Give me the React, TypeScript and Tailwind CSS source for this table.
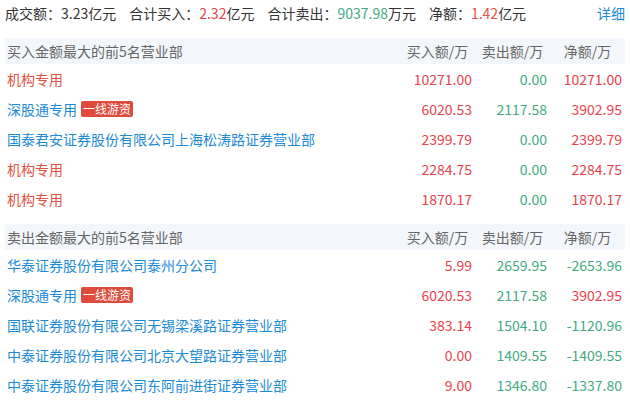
type Row = {
  name: string;
  tag?: string;
  buy: string;
  sell: string;
  net: string;
  plain?: boolean;
};

const buyRows: Row[] = [
  { name: "机构专用", buy: "10271.00", sell: "0.00", net: "10271.00", plain: true },
  { name: "深股通专用", tag: "一线游资", buy: "6020.53", sell: "2117.58", net: "3902.95" },
  { name: "国泰君安证券股份有限公司上海松涛路证券营业部", buy: "2399.79", sell: "0.00", net: "2399.79" },
  { name: "机构专用", buy: "2284.75", sell: "0.00", net: "2284.75", plain: true },
  { name: "机构专用", buy: "1870.17", sell: "0.00", net: "1870.17", plain: true },
];

const sellRows: Row[] = [
  { name: "华泰证券股份有限公司泰州分公司", buy: "5.99", sell: "2659.95", net: "-2653.96" },
  { name: "深股通专用", tag: "一线游资", buy: "6020.53", sell: "2117.58", net: "3902.95" },
  { name: "国联证券股份有限公司无锡梁溪路证券营业部", buy: "383.14", sell: "1504.10", net: "-1120.96" },
  { name: "中泰证券股份有限公司北京大望路证券营业部", buy: "0.00", sell: "1409.55", net: "-1409.55" },
  { name: "中泰证券股份有限公司东阿前进街证券营业部", buy: "9.00", sell: "1346.80", net: "-1337.80" },
];

const RED = "text-[#e8434c]";
const GREEN = "text-[#44aa7f]";

function Section({ title, rows }: { title: string; rows: Row[] }) {
  return (
    <div>
      {/* Header band */}
      <div className="flex h-[26px] items-center bg-[#f3f6fa] text-[#666]">
        <div className="flex-1 pl-[2px]">{title}</div>
        <div className="w-[75px] text-center">买入额/万</div>
        <div className="w-[75px] text-center">卖出额/万</div>
        <div className="w-[75px] text-center">净额/万</div>
      </div>
      {rows.map((r, i) => (
        <div key={i} className="flex h-[30px] items-center">
          <div className="flex flex-1 items-center pl-[2px]">
            <span className={r.plain ? "text-[#e2503f]" : "text-[#1d8ad6]"}>
              {r.name}
            </span>
            {r.tag && (
              <span className="ml-[4px] flex h-[16px] items-center rounded-[2px] bg-[#e04a3a] px-[2px] text-[12px] leading-none text-white">
                {r.tag}
              </span>
            )}
          </div>
          <div className={`w-[75px] pr-[3px] text-right ${RED}`}>{r.buy}</div>
          <div className={`w-[75px] pr-[3px] text-right ${GREEN}`}>{r.sell}</div>
          <div
            className={`w-[75px] pr-[3px] text-right ${
              r.net.startsWith("-") ? GREEN : RED
            }`}
          >
            {r.net}
          </div>
        </div>
      ))}
    </div>
  );
}

export default function App() {
  return (
    <div
      className="h-[400px] w-[630px] overflow-hidden bg-white px-[5px] text-[14px] text-[#333]"
      style={{ fontFamily: '"Noto Sans CJK SC", "Noto Sans", sans-serif' }}
    >
      {/* Summary */}
      <div className="flex h-[26px] items-center">
        <div className="flex flex-1 items-center gap-[13px]">
          <span>成交额：3.23亿元</span>
          <span>
            合计买入：<span className={RED}>2.32</span>亿元
          </span>
          <span>
            合计卖出：<span className={GREEN}>9037.98</span>万元
          </span>
          <span>
            净额：<span className="text-[#e8503f]">1.42</span>亿元
          </span>
        </div>
        <a className="text-[#1d8ad6]">详细</a>
      </div>

      <div className="mt-[12px]">
        <Section title="买入金额最大的前5名营业部" rows={buyRows} />
      </div>
      <div className="mt-[10px]">
        <Section title="卖出金额最大的前5名营业部" rows={sellRows} />
      </div>
    </div>
  );
}
